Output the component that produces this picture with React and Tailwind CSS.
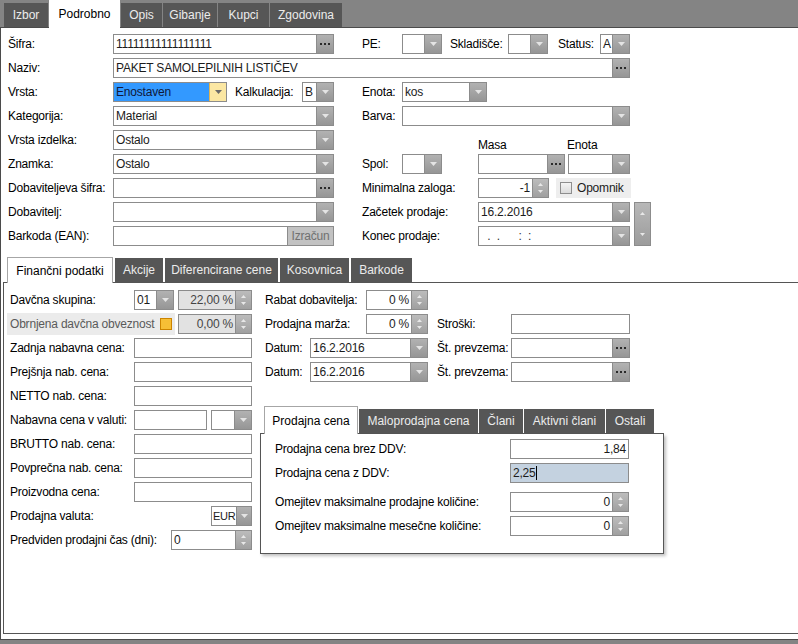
import React from "react";

function Tri({ up = false, fill = "#e4e4e4", w = 7, h = 4 }) {
  return (
    <svg width={w} height={h} viewBox={`0 0 ${w} ${h}`} className="block">
      <path d={up ? `M0 ${h}L${w / 2} 0L${w} ${h}Z` : `M0 0H${w}L${w / 2} ${h}Z`} fill={fill} />
    </svg>
  );
}

function DropBtn({ yellow, w = "w-[17px]" }) {
  if (yellow)
    return (
      <div className={`${w} shrink-0 bg-[#fbe7a3] border-l border-[#e0b252] flex items-center justify-center`}>
        <Tri fill="#6a6a6a" />
      </div>
    );
  return (
    <div className={`${w} shrink-0 bg-linear-to-b from-[#b2b2b2] to-[#969696] border-l border-[#8c8c8c] flex items-center justify-center`}>
      <Tri />
    </div>
  );
}

function DotsBtn() {
  return (
    <div className="w-[17px] shrink-0 bg-linear-to-b from-[#b2b2b2] to-[#969696] border-l border-[#8c8c8c] flex items-center justify-center gap-[2px]">
      <span className="w-[2px] h-[2px] bg-[#2a2a2a]" />
      <span className="w-[2px] h-[2px] bg-[#2a2a2a]" />
      <span className="w-[2px] h-[2px] bg-[#2a2a2a]" />
    </div>
  );
}

function SpinBtn() {
  return (
    <div className="w-[16px] shrink-0 bg-linear-to-b from-[#bcbcbc] to-[#a0a0a0] border-l border-[#8c8c8c] flex flex-col items-center justify-center gap-[4px]">
      <Tri up w={5} h={3} fill="#e8e8e8" />
      <Tri w={5} h={3} fill="#e8e8e8" />
    </div>
  );
}

function Field({ w, children, right = false, btn = null, bg = "bg-white", txt = "text-[#1c1c1c]", pad = "px-[2px]" }) {
  return (
    <div className={`${w} h-[20px] shrink-0 flex border border-[#8c8c8c] ${bg}`}>
      <div
        className={`flex-1 min-w-0 ${pad} leading-[18px] whitespace-pre overflow-hidden ${txt} ${
          right ? "text-right" : ""
        }`}
      >
        {children}
      </div>
      {btn}
    </div>
  );
}

const Combo = (p) => <Field {...p} btn={<DropBtn yellow={p.yellow} w={p.bw} />} />;
const Dots = (p) => <Field {...p} btn={<DotsBtn />} />;
const Spin = (p) => <Field right {...p} btn={<SpinBtn />} />;

function Lbl({ w, children, cls = "" }) {
  return <span className={`${w} shrink-0 whitespace-nowrap leading-[20px] ${cls}`}>{children}</span>;
}

function Row({ children, cls = "" }) {
  return <div className={`flex items-center h-[20px] ${cls}`}>{children}</div>;
}

function TabI({ w, h = "h-[24px]", children }) {
  return (
    <div className={`${w} ${h} shrink-0 tracking-normal bg-[#565656] text-[#ececec] flex items-center justify-center whitespace-nowrap`}>
      {children}
    </div>
  );
}

function TabA({ w, h, children, border = true }) {
  return (
    <div
      className={`${w} ${h} -mb-[1px] shrink-0 tracking-normal relative bg-white text-black flex items-center justify-center whitespace-nowrap ${
        border ? "border-l border-t border-r border-[#a6a6a6]" : ""
      }`}
    >
      {children}
    </div>
  );
}

export default function App() {
  return (
    <div className="w-[798px] h-[644px] overflow-hidden bg-[#848484] font-['Liberation_Sans',Arial,sans-serif] text-[12px] tracking-[-0.2px] text-black">
      {/* top tabs */}
      <div className="h-[28px] flex items-end gap-[1px] pl-[4px] border-b border-[#4b4b4b]">
        <TabI w="w-[44px]">Izbor</TabI>
        <TabA w="w-[71px]" h="h-[28px]" border={false}>
          Podrobno
        </TabA>
        <TabI w="w-[41px]">Opis</TabI>
        <TabI w="w-[54px]">Gibanje</TabI>
        <TabI w="w-[51px]">Kupci</TabI>
        <TabI w="w-[72px]">Zgodovina</TabI>
      </div>

      {/* main panel */}
      <div className="h-[612px] bg-white border-l border-b border-[#4b4b4b] flex flex-col">
        <div className="flex flex-col gap-[4px] pt-[6px] pl-[7px]">
          <Row>
            <Lbl w="w-[105px]">Šifra:</Lbl>
            <Dots w="w-[221px]">11111111111111111</Dots>
            <Lbl w="w-[40px]" cls="ml-[28px]">PE:</Lbl>
            <Combo w="w-[40px]" />
            <Lbl w="w-[58px]" cls="ml-[8px]">Skladišče:</Lbl>
            <Combo w="w-[40px]" />
            <Lbl w="w-[42px]" cls="ml-[10px]">Status:</Lbl>
            <Combo w="w-[30px]">A</Combo>
          </Row>
          <Row>
            <Lbl w="w-[105px]">Naziv:</Lbl>
            <Dots w="w-[517px]">PAKET SAMOLEPILNIH LISTIČEV</Dots>
          </Row>
          <Row>
            <Lbl w="w-[105px]">Vrsta:</Lbl>
            <Combo w="w-[114px]" yellow bg="bg-[#3399ff]" txt="text-[#10183a]">
              Enostaven
            </Combo>
            <Lbl w="w-[67px]" cls="ml-[8px]">Kalkulacija:</Lbl>
            <Combo w="w-[32px]">B</Combo>
            <Lbl w="w-[40px]" cls="ml-[28px]">Enota:</Lbl>
            <Combo w="w-[85px]">kos</Combo>
          </Row>
          <Row>
            <Lbl w="w-[105px]">Kategorija:</Lbl>
            <Combo w="w-[221px]">Material</Combo>
            <Lbl w="w-[40px]" cls="ml-[28px]">Barva:</Lbl>
            <Combo w="w-[228px]" />
          </Row>
          <Row>
            <Lbl w="w-[105px]">Vrsta izdelka:</Lbl>
            <Combo w="w-[221px]">Ostalo</Combo>
            <Lbl w="w-[89px]" cls="ml-[144px] relative top-[5px]">Masa</Lbl>
            <Lbl w="w-[50px]" cls="relative top-[5px]">Enota</Lbl>
          </Row>
          <Row>
            <Lbl w="w-[105px]">Znamka:</Lbl>
            <Combo w="w-[221px]">Ostalo</Combo>
            <Lbl w="w-[40px]" cls="ml-[28px]">Spol:</Lbl>
            <Combo w="w-[40px]" />
            <div className="ml-[36px]">
              <Dots w="w-[87px]" />
            </div>
            <div className="ml-[3px]">
              <Combo w="w-[62px]" />
            </div>
          </Row>
          <Row>
            <Lbl w="w-[105px]">Dobaviteljeva šifra:</Lbl>
            <Dots w="w-[221px]" />
            <Lbl w="w-[116px]" cls="ml-[28px]">Minimalna zaloga:</Lbl>
            <Spin w="w-[71px]">-1</Spin>
            <div className="ml-[7px] w-[75px] h-[20px] bg-[#eeeeee] flex items-center pl-[4px] gap-[5px]">
              <span className="w-[12px] h-[12px] border border-[#8e8e8e] bg-linear-to-b from-[#f4f4f4] to-[#dcdcdc]" />
              <span className="text-[#1c1c1c]">Opomnik</span>
            </div>
          </Row>
          <div className="flex items-start">
            <div className="flex flex-col gap-[4px]">
              <Row>
                <Lbl w="w-[105px]">Dobavitelj:</Lbl>
                <Combo w="w-[221px]" />
                <Lbl w="w-[116px]" cls="ml-[28px]">Začetek prodaje:</Lbl>
                <Combo w="w-[152px]">16.2.2016</Combo>
              </Row>
              <Row>
                <Lbl w="w-[105px]">Barkoda (EAN):</Lbl>
                <Field
                  w="w-[221px]"
                  btn={
                    <div className="w-[46px] shrink-0 bg-[#c2c2c2] border-l border-[#8c8c8c] text-[#707070] leading-[18px] text-center">
                      Izračun
                    </div>
                  }
                />
                <Lbl w="w-[116px]" cls="ml-[28px]">Konec prodaje:</Lbl>
                <Combo w="w-[152px]" txt="text-[#333]">{"  .  .      :  :"}</Combo>
              </Row>
            </div>
            <div className="ml-[4px] w-[17px] h-[44px] border border-[#8c8c8c] bg-linear-to-b from-[#b8b8b8] to-[#9c9c9c] flex flex-col items-center justify-around">
              <Tri up w={5} h={3} fill="#e8e8e8" />
              <Tri w={5} h={3} fill="#e8e8e8" />
            </div>
          </div>
        </div>

        {/* finance section */}
        <div className="ml-[2px] mt-[11px] flex flex-col">
          <div className="h-[26px] flex items-end gap-[2px] pl-[4px] border-b border-[#555]">
            <TabA w="w-[106px]" h="h-[26px]">
              Finančni podatki
            </TabA>
            <TabI w="w-[48px]">Akcije</TabI>
            <TabI w="w-[113px]">Diferencirane cene</TabI>
            <TabI w="w-[69px]">Kosovnica</TabI>
            <TabI w="w-[61px]">Barkode</TabI>
          </div>
          <div className="h-[351px] border-l border-b border-[#555] flex pt-[7px] pl-[6px]">
            {/* left column */}
            <div className="w-[242px] shrink-0 flex flex-col gap-[4px]">
              <Row>
                <Lbl w="w-[124px]">Davčna skupina:</Lbl>
                <Combo w="w-[40px]">01</Combo>
                <div className="ml-[4px]">
                  <Spin w="w-[74px]" bg="bg-[#e2e2e2]" txt="text-[#444]">
                    22,00 %
                  </Spin>
                </div>
              </Row>
              <Row>
                <div className="-ml-[3px] w-[168px] h-[22px] bg-[#ebebeb] flex items-center pl-[3px]">
                  <span className="text-[#5a5a5a] whitespace-nowrap">Obrnjena davčna obveznost</span>
                  <span className="ml-auto mr-[3px] w-[12px] h-[12px] border border-[#cc8400] bg-[#f7bf36]" />
                </div>
                <div className="ml-[3px]">
                  <Spin w="w-[74px]" bg="bg-[#e2e2e2]" txt="text-[#444]">
                    0,00 %
                  </Spin>
                </div>
              </Row>
              <Row>
                <Lbl w="w-[124px]">Zadnja nabavna cena:</Lbl>
                <Field w="w-[118px]" />
              </Row>
              <Row>
                <Lbl w="w-[124px]">Prejšnja nab. cena:</Lbl>
                <Field w="w-[118px]" />
              </Row>
              <Row>
                <Lbl w="w-[124px]">NETTO nab. cena:</Lbl>
                <Field w="w-[118px]" />
              </Row>
              <Row>
                <Lbl w="w-[124px]">Nabavna cena v valuti:</Lbl>
                <Field w="w-[73px]" />
                <div className="ml-[4px]">
                  <Combo w="w-[41px]" />
                </div>
              </Row>
              <Row>
                <Lbl w="w-[124px]">BRUTTO nab. cena:</Lbl>
                <Field w="w-[118px]" />
              </Row>
              <Row>
                <Lbl w="w-[124px]">Povprečna nab. cena:</Lbl>
                <Field w="w-[118px]" />
              </Row>
              <Row>
                <Lbl w="w-[124px]">Proizvodna cena:</Lbl>
                <Field w="w-[118px]" />
              </Row>
              <Row>
                <Lbl w="w-[201px]">Prodajna valuta:</Lbl>
                <Combo w="w-[41px]" bw="w-[15px]" pad="pl-[1px]" txt="text-[11px] tracking-[-0.3px] text-[#1c1c1c]">
                  EUR
                </Combo>
              </Row>
              <Row>
                <Lbl w="w-[161px]">Predviden prodajni čas (dni):</Lbl>
                <Spin w="w-[81px]" right={false}>
                  0
                </Spin>
              </Row>
            </div>

            {/* right column */}
            <div className="ml-[8px] flex flex-col">
              <div className="flex flex-col gap-[4px] pl-[5px]">
                <Row>
                  <Lbl w="w-[101px]">Rabat dobavitelja:</Lbl>
                  <Spin w="w-[62px]">0 %</Spin>
                </Row>
                <Row>
                  <Lbl w="w-[101px]">Prodajna marža:</Lbl>
                  <Spin w="w-[62px]">0 %</Spin>
                  <Lbl w="w-[74px]" cls="ml-[9px]">Stroški:</Lbl>
                  <Field w="w-[119px]" />
                </Row>
                <Row>
                  <Lbl w="w-[45px]">Datum:</Lbl>
                  <Combo w="w-[118px]">16.2.2016</Combo>
                  <Lbl w="w-[74px]" cls="ml-[9px]">Št. prevzema:</Lbl>
                  <Dots w="w-[119px]" />
                </Row>
                <Row>
                  <Lbl w="w-[45px]">Datum:</Lbl>
                  <Combo w="w-[118px]">16.2.2016</Combo>
                  <Lbl w="w-[74px]" cls="ml-[9px]">Št. prevzema:</Lbl>
                  <Dots w="w-[119px]" />
                </Row>
              </div>

              {/* nested tabs */}
              <div className="mt-[24px] w-[404px] flex flex-col">
                <div className="h-[28px] flex items-end gap-[1px] pl-[4px] border-b border-[#555]">
                  <TabA w="w-[94px]" h="h-[28px]">
                    Prodajna cena
                  </TabA>
                  <TabI w="w-[119px]">Maloprodajna cena</TabI>
                  <TabI w="w-[44px]">Člani</TabI>
                  <TabI w="w-[81px]">Aktivni člani</TabI>
                  <TabI w="w-[48px]">Ostali</TabI>
                </div>
                <div className="h-[120px] border-l border-r border-b border-[#555] bg-white shadow-[2px_2px_3px_rgba(0,0,0,0.25)] pt-[5px] pl-[14px] flex flex-col">
                  <div className="flex flex-col gap-[4px]">
                    <Row>
                      <Lbl w="w-[235px]">Prodajna cena brez DDV:</Lbl>
                      <Field w="w-[119px]" right>
                        1,84
                      </Field>
                    </Row>
                    <Row>
                      <Lbl w="w-[235px]">Prodajna cena z DDV:</Lbl>
                      <Field w="w-[119px]" bg="bg-[#c4d2e0]">
                        <span>2,25</span>
                        <span className="inline-block w-[1px] h-[14px] bg-black align-middle -mt-[2px]" />
                      </Field>
                    </Row>
                  </div>
                  <div className="flex flex-col gap-[4px] mt-[9px]">
                    <Row>
                      <Lbl w="w-[235px]">Omejitev maksimalne prodajne količine:</Lbl>
                      <Spin w="w-[119px]">0</Spin>
                    </Row>
                    <Row>
                      <Lbl w="w-[235px]">Omejitev maksimalne mesečne količine:</Lbl>
                      <Spin w="w-[119px]">0</Spin>
                    </Row>
                  </div>
                </div>
              </div>
            </div>
          </div>
        </div>
      </div>
    </div>
  );
}
